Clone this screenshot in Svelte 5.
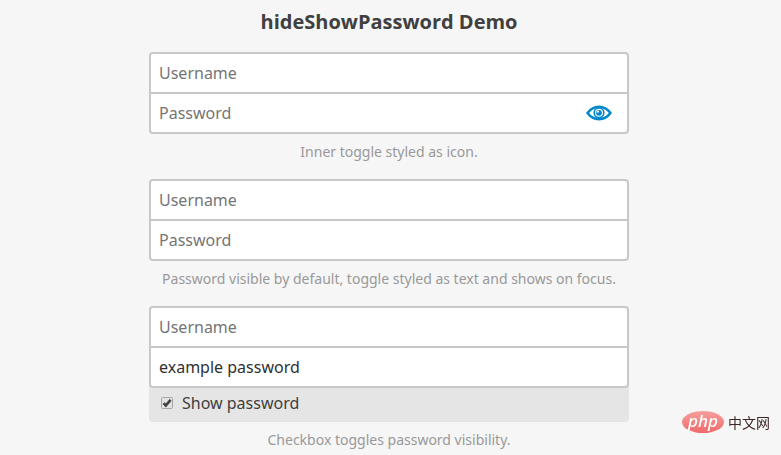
<script lang="ts">
  let firstVisible = $state(false);
  let secondFocused = $state(false);
  let secondVisible = $state(true);
  let thirdVisible = $state(true);
  let examplePassword = $state("example password");
</script>

<main>
  <h1>hideShowPassword Demo</h1>

  <form>
    <div class="fields">
      <input type="text" placeholder="Username" aria-label="Username" />
      <div class="row">
        <input type={firstVisible ? "text" : "password"} placeholder="Password" aria-label="Password" />
        <button
          type="button"
          class="eye"
          aria-label="Show password"
          aria-pressed={firstVisible}
          onclick={() => (firstVisible = !firstVisible)}
        >
          <svg width="26" height="16" viewBox="0 0 26 16" aria-hidden="true">
            <path
              d="M1.5 8C4.5 4 8 1.8 13 1.8S21.5 4 24.5 8C21.5 12 18 14.2 13 14.2S4.5 12 1.5 8Z"
              fill="none" stroke="#0088cc" stroke-width="2.5" stroke-linejoin="round"
            />
            <circle cx="13" cy="7.8" r="4.8" fill="none" stroke="#0088cc" stroke-width="1.6" />
            <circle cx="13" cy="7.8" r="2.9" fill="#0088cc" />
            <path d="M10.6 7.6A2.4 2.4 0 0 1 13 5.4V7.6Z" fill="#fff" />
          </svg>
        </button>
      </div>
    </div>
    <p>Inner toggle styled as icon.</p>
  </form>

  <form>
    <div class="fields">
      <input type="text" placeholder="Username" aria-label="Username" />
      <div class="row">
        <input
          type={secondVisible ? "text" : "password"}
          placeholder="Password"
          aria-label="Password"
          onfocus={() => (secondFocused = true)}
          onblur={() => (secondFocused = false)}
        />
        {#if secondFocused}
        <button
          type="button"
          class="toggle"
          onmousedown={(e) => e.preventDefault()}
          onclick={() => (secondVisible = !secondVisible)}
        >{secondVisible ? "Hide" : "Show"}</button>
        {/if}
      </div>
    </div>
    <p>Password visible by default, toggle styled as text and shows on focus.</p>
  </form>

  <form>
    <div class="group">
      <div class="fields">
        <input type="text" placeholder="Username" aria-label="Username" />
        <div class="row">
          <input type={thirdVisible ? "text" : "password"} placeholder="Password" aria-label="Password" bind:value={examplePassword} />
        </div>
      </div>
      <label class="check">
        <input type="checkbox" bind:checked={thirdVisible} />
        <svg class="box" width="12" height="12" viewBox="0 0 12 12" aria-hidden="true">
          <rect x="0.5" y="0.5" width="11" height="11" rx="1" fill="#e2e2e2" stroke="#a6a6a6" />
          {#if thirdVisible}
          <path d="M2.6 6.2L4.8 8.6L9.6 2.8" fill="none" stroke="#404040" stroke-width="2.6" />
          {/if}
        </svg>
        Show password
      </label>
    </div>
    <p>Checkbox toggles password visibility.</p>
  </form>
</main>

<div class="brand">
  <svg width="42" height="22" viewBox="0 0 42 22" aria-hidden="true">
    <defs>
      <linearGradient id="badge" x1="0" y1="0" x2="0" y2="1">
        <stop offset="0" stop-color="#f5a09c" />
        <stop offset="1" stop-color="#f06a6a" />
      </linearGradient>
    </defs>
    <ellipse cx="21" cy="11" rx="21" ry="11" fill="url(#badge)" />
    <text x="21" y="16" text-anchor="middle">php</text>
  </svg>
  <span>中文网</span>
</div>

<style>
:global(body) {
  margin: 0;
  background: #f6f6f6;
  color: #404040;
  font: 16px/24px "Noto Sans", "Open Sans", sans-serif;
}
main {
  max-width: 480px;
  margin: 0 auto;
  padding: 8px 13px 0 10px;
}
h1 {
  margin: 0 0 16px;
  font-family: "Open Sans", "Noto Sans", sans-serif;
  font-size: 20px;
  line-height: 28px;
  font-weight: 700;
  text-align: center;
}
.fields {
  background: #fff;
  border: 2px solid #c8c8c8;
  border-radius: 4px;
}
.row {
  display: flex;
  align-items: center;
  border-top: 2px solid #c8c8c8;
}
.fields input {
  display: block;
  box-sizing: border-box;
  width: 100%;
  min-width: 0;
  height: 38px;
  padding: 0 8px;
  border: 0;
  outline: 0;
  background: transparent;
  color: #303030;
  font: inherit;
}
.fields input::placeholder { color: #757575; opacity: 1; }
button {
  border: 0;
  background: none;
  color: #0088cc;
  font: inherit;
  cursor: pointer;
}
.eye {
  display: flex;
  padding: 8px 15px;
}
.toggle { padding: 0 12px; }
.group {
  background: #e5e5e5;
  border-radius: 4px;
}
.check {
  display: flex;
  align-items: center;
  gap: 9px;
  padding: 3px 12px 7px;
}
.check input {
  position: absolute;
  width: 12px;
  height: 12px;
  margin: 0;
  opacity: 0;
}
.check input:focus-visible + .box { outline: 2px solid #0088cc; }
p {
  margin: 0 -8px;
  padding: 8px 0 17px;
  color: #999;
  font-size: 14px;
  line-height: 20px;
  text-align: center;
}
.brand {
  position: fixed;
  right: 11px;
  bottom: 22px;
  display: flex;
  align-items: center;
  gap: 4px;
  color: #3c2626;
  font: 14px/22px "Noto Sans CJK SC", sans-serif;
}
.brand svg { overflow: visible; }
.brand text {
  fill: #fff;
  font: italic 500 17px/20px "Noto Sans", sans-serif;
}
</style>
